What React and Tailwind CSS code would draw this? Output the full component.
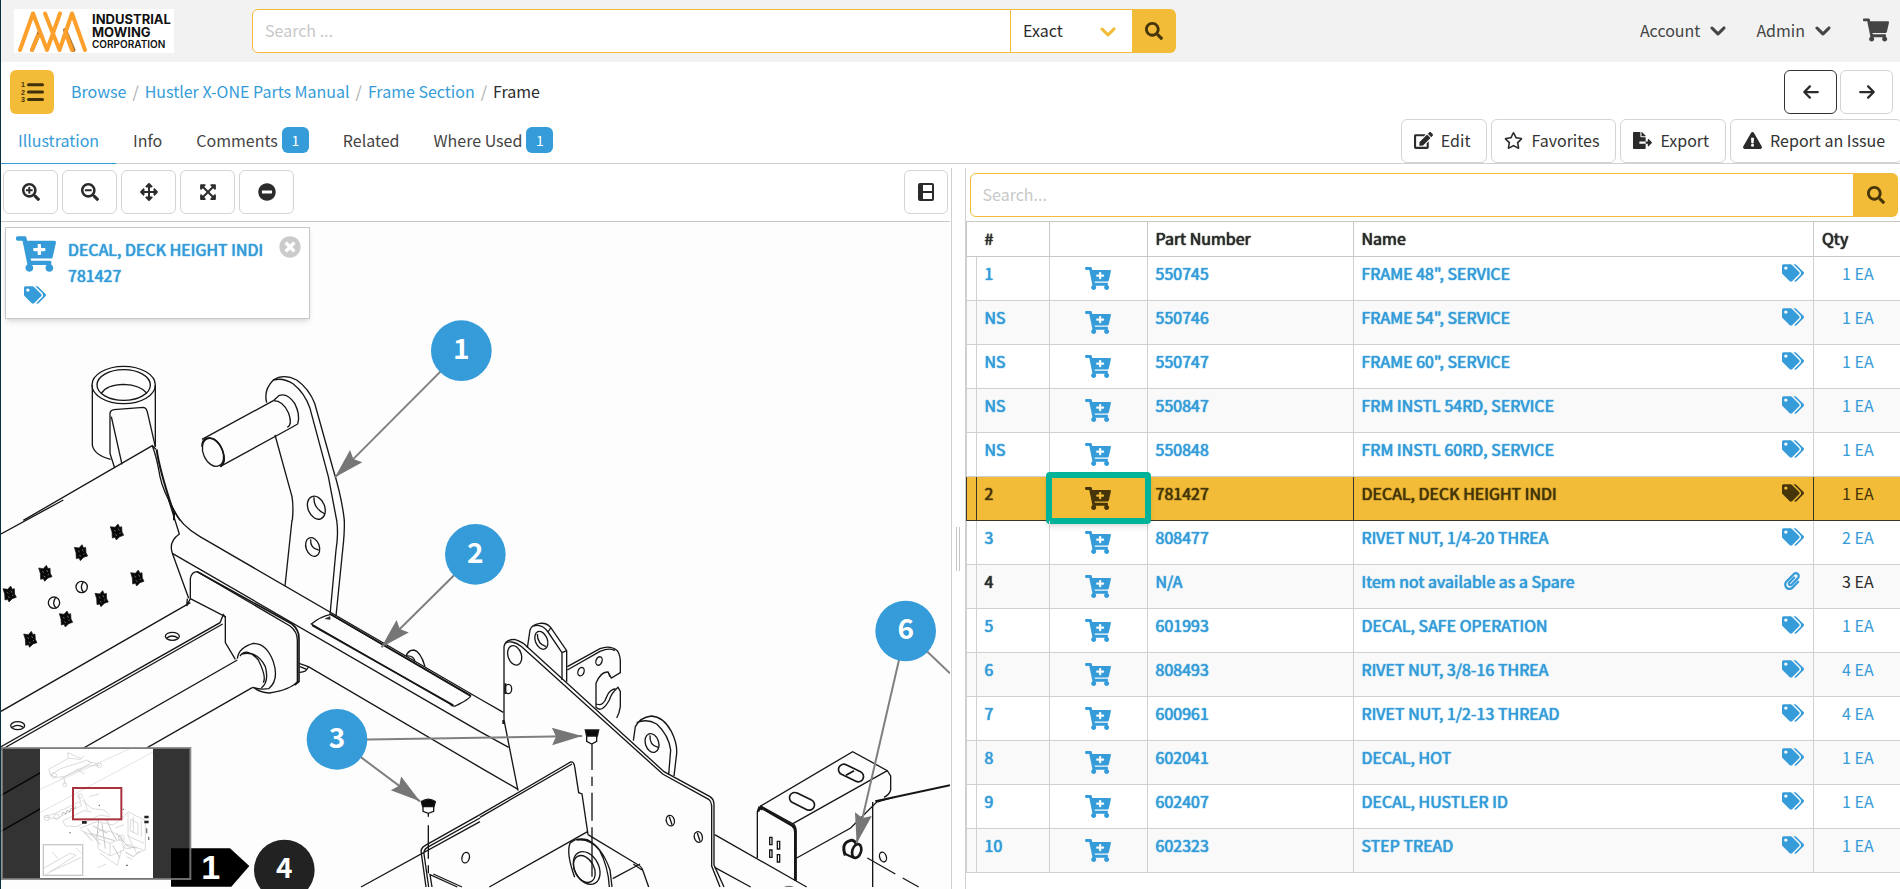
import { useState } from 'react';
import {
  FaSearch, FaSearchPlus, FaSearchMinus, FaArrowsAlt, FaExpandArrowsAlt, FaMinusCircle,
  FaEdit, FaRegStar, FaFileExport, FaExclamationTriangle, FaShoppingCart, FaCartPlus,
  FaTags, FaPaperclip, FaTimesCircle
} from 'react-icons/fa';
import { FaChevronDown, FaArrowLeft, FaArrowRight } from 'react-icons/fa6';

const PARTS = [
  { item: '1', number: '550745', name: 'FRAME 48", SERVICE', qty: '1 EA' },
  { item: 'NS', number: '550746', name: 'FRAME 54", SERVICE', qty: '1 EA' },
  { item: 'NS', number: '550747', name: 'FRAME 60", SERVICE', qty: '1 EA' },
  { item: 'NS', number: '550847', name: 'FRM INSTL 54RD, SERVICE', qty: '1 EA' },
  { item: 'NS', number: '550848', name: 'FRM INSTL 60RD, SERVICE', qty: '1 EA' },
  { item: '2', number: '781427', name: 'DECAL, DECK HEIGHT INDI', qty: '1 EA' },
  { item: '3', number: '808477', name: 'RIVET NUT, 1/4-20 THREA', qty: '2 EA' },
  { item: '4', number: 'N/A', name: 'Item not available as a Spare', qty: '3 EA', unavailable: true },
  { item: '5', number: '601993', name: 'DECAL, SAFE OPERATION', qty: '1 EA' },
  { item: '6', number: '808493', name: 'RIVET NUT, 3/8-16 THREA', qty: '4 EA' },
  { item: '7', number: '600961', name: 'RIVET NUT, 1/2-13 THREAD', qty: '4 EA' },
  { item: '8', number: '602041', name: 'DECAL, HOT', qty: '1 EA' },
  { item: '9', number: '602407', name: 'DECAL, HUSTLER ID', qty: '1 EA' },
  { item: '10', number: '602323', name: 'STEP TREAD', qty: '1 EA' }
];

const TABS = [
  { label: 'Illustration' },
  { label: 'Info' },
  { label: 'Comments', count: 1 },
  { label: 'Related' },
  { label: 'Where Used', count: 1 }
];

const BOLTS = [[351, 96], [243, 158], [136, 220], [29, 282], [412, 234], [305, 296], [198, 357], [91, 418]];

// Half-bold: regular weight thickened a little
const STRONG = '[text-shadow:0_0_1px_currentColor,0_0_1px_currentColor]';

function Logo() {
  return (
    <svg viewBox="0 0 160 44" className="h-11 w-40 bg-white" role="img" aria-label="Industrial Mowing Corporation">
      <g fill="none" stroke="#fd9f2b" strokeWidth="4" strokeLinecap="round" strokeLinejoin="round">
        <path d="M18 41 25.500 23M59.500 41 51 21" stroke="#a8702a" />
        <path d="M6 41 19 4.500 33 41M18 41 24 27M31 4.500 45.500 41M33 41 46 4.500M45.500 41 58 4.500 71 41M58 41 52 25" />
      </g>
      <g fill="#111" fontFamily="Inter, sans-serif" fontWeight="700" fontSize="13">
        <text x="78" y="15">INDUSTRIAL</text>
        <text x="78" y="28">MOWING</text>
        <text x="78" y="39" fontSize="10" fontWeight="600">CORPORATION</text>
      </g>
    </svg>
  );
}

function NumberedListIcon() {
  return (
    <svg viewBox="0 0 24 24" className="size-6" aria-hidden="true">
      <g fill="#3f310c" fontFamily="Liberation Sans, sans-serif" fontWeight="700" fontSize="7">
        <text x="1" y="7">1</text>
        <text x="1" y="14.500">2</text>
        <text x="1" y="22">3</text>
      </g>
      <path d="M8.500 4.700H22.500M8.500 12H22.500M8.500 19.500H22.500" stroke="#3f310c" strokeWidth="3" strokeLinecap="round" />
    </svg>
  );
}

function LayoutIcon() {
  return (
    <svg viewBox="0 0 16 18" className="h-[18px] w-4" aria-hidden="true">
      <rect x="1" y="1" width="14" height="16" rx="1" fill="none" stroke="#2b2b2b" strokeWidth="2" />
      <path d="M3 1V17" stroke="#2b2b2b" strokeWidth="4" />
      <path d="M4 9H15" stroke="#2b2b2b" strokeWidth="2" />
    </svg>
  );
}

function Hotspot({ x, y, label, dark }) {
  return (
    <g>
      <circle cx={x} cy={y} r="91" fill={dark ? '#222' : '#359cd9'} />
      <text x={x} y={y + 25} textAnchor="middle" fill="#fff" fontSize="84" fontWeight="700">{label}</text>
    </g>
  );
}

function Leader({ x1, y1, x2, y2 }) {
  const angle = (Math.atan2(y2 - y1, x2 - x1) * 180) / Math.PI;
  return (
    <g>
      <path d={`M${x1} ${y1}L${x2} ${y2}`} stroke="#808080" strokeWidth="6" />
      <path d="M0 0-90-26-78 0-90 26Z" fill="#767676" transform={`translate(${x2} ${y2}) rotate(${angle})`} />
    </g>
  );
}

function MiniMap() {
  return (
    <g>
      <rect x="6" y="744" width="565" height="393" fill="#000" fillOpacity="0.8" />
      <rect x="120" y="746" width="339" height="388" fill="#fff" />
      <path d="M120 868 390 746M120 938 459 756" stroke="#e4e4e4" strokeWidth="3" />
      <g fill="none" stroke="#c8c8c8" strokeWidth="2">
        <path d="M146 808 205 775 240 778 252 768M152 826 182 806 262 780 272 790 192 830 172 832ZM205 775 203 758 244 776M182 836 264 798 300 796M264 784 292 792M192 830 194 852M228 806 254 822M146 808 152 826" />
        <circle cx="194" cy="854" r="6" />
        <circle cx="298" cy="796" r="7" />
        <circle cx="162" cy="826" r="8" />
        <path d="M132 950 166 940 236 906 246 916 170 956 136 952M190 962 252 932 274 936M236 884 242 908M252 896 262 930M268 890 298 882M246 900 276 926 312 930 330 946M188 962 196 978 230 980 300 945 330 950" />
        <path d="M184 946 190 936 196 942 202 930 208 936 214 924 220 930 228 918" stroke="#999" />
        <path d="M240 985 290 965 340 975 372 950 384 935 436 962 436 1050 410 1060 384 1008 384 940M392 958 414 970 414 1004 390 992ZM384 1008 432 1030M400 950V1000M424 962V1010" />
        <path d="M242 990 286 1012 300 990 336 996 364 1010 372 1050 330 1068 294 1046 294 1016 330 1030 330 1068M300 1060 352 1096 364 1050M330 1030 366 1016M346 984 372 974M380 1070 396 1078M318 1092 292 1104M402 1040 430 1050" />
        <path d="M250 994 276 1022M262 986 300 1034M280 978 322 1000M350 1000 384 1040 410 1044M296 960 290 1020M306 970 316 1046M270 1000 344 1022M320 960 334 992 350 1020M338 1036 360 1074M376 1056 400 1070 420 1054" strokeWidth="3" />
        <circle cx="140" cy="954" r="8" />
        <circle cx="170" cy="950" r="8" />
        <circle cx="240" cy="888" r="7" />
        <circle cx="364" cy="1014" r="9" />
        <ellipse cx="384" cy="1040" rx="12" ry="6" />
        <rect x="130" y="1034" width="118" height="92" strokeWidth="4" />
        <path d="M132 1104 210 1060 228 1066 150 1116 138 1124M150 1116 244 1072M156 1056 176 1078M228 1044 244 1060" />
      </g>
      <path d="M246 967H260M433 951H446M433 966H446" stroke="#222" strokeWidth="8" />
      <path d="M368 928H372M296 916H300M208 998H212M378 1096H384M440 985V1000M446 1010V1020" stroke="#777" strokeWidth="4" />
      <rect x="219" y="864" width="145" height="94" fill="none" stroke="#a8323e" strokeWidth="6" />
      <rect x="6" y="744" width="565" height="393" fill="none" stroke="#808080" strokeOpacity="0.85" strokeWidth="6" />
    </g>
  );
}

function FrameDrawing() {
  return (
    <svg
      viewBox="3 666 2850 2001"
      preserveAspectRatio="xMinYMin slice"
      className="absolute inset-0 h-full w-full"
      fill="none"
      role="img"
      aria-label="Frame illustration"
    >
      {/* Caster tube and lift arm */}
      <g transform="translate(0 480)" stroke="#161616" strokeWidth="4">
        <ellipse cx="371" cy="675" rx="95" ry="56" />
        <ellipse cx="371" cy="675" rx="80" ry="46" />
        <path d="M304 700Q320 674 371 673 422 675 441 700" />
        <path d="M277 675V856Q284 886 332 898M466 675V860" />
        <path d="M344 924 330 880V765Q328 752 342 749L430 742Q440 743 443 760L466 860" />
        <path d="M334 770 366 913" />
        <path d="M70 1081 457 857 468 868" />
        <path d="M457 857Q470 890 480 950 490 1000 540 1081" />
        <path d="M470 868Q478 930 522 1060V1081" strokeWidth="6" />
        <path d="M606 838 820 722M660 920 872 804M872 804 893 792" />
        <ellipse cx="639" cy="877" rx="29" ry="44" transform="rotate(-24 639 877)" />
        <path d="M606 860Q606 832 632 834 654 838 668 872 680 905 662 920" strokeWidth="5" />
        <path d="M820 722Q850 722 866 760 878 795 862 802M820 722 838 706Q862 698 884 730 902 765 893 792" />
        <path d="M800 728Q790 690 820 660 850 652 880 672 915 700 930 745L985 950 1010 1081" />
        <path d="M820 660Q850 640 890 660 926 685 944 730L1000 930Q1025 1010 1033 1081" />
        <path d="M825 825 876 1010Q881 1040 877 1081" />
        <ellipse cx="949" cy="1043" rx="25" ry="36" transform="rotate(-22 949 1043)" />
        <path d="M942 1012Q940 1045 975 1062" />
      </g>

      {/* Side plate, rails and cross tube */}
      <g transform="translate(0 1500)" stroke="#161616" strokeWidth="4">
        <path d="M3 102 190 0M506 0 538 102Q505 125 517 160L566 295" />
        <path d="M508 0Q530 70 600 110L1440 597" />
        <path d="M517 160 1440 695" />
        <path d="M876 60 855 258M1010 60Q1016 100 1008 150L990 345M1033 60Q1034 100 1028 150L1008 348" />
        <ellipse cx="938" cy="141" rx="20" ry="29" transform="rotate(-20 938 141)" />
        <path d="M932 118Q930 145 956 150" />
        <path d="M571 296V236Q574 216 592 215L870 378Q892 395 892 420V545Q870 570 808 579 780 578 760 562" />
        <path d="M592 215 876 372Q897 390 897 414V545L884 555" strokeWidth="5" />
        <path d="M571 296 560 318 562 296M571 296 676 350V428L706 478" />
        <path d="M3 634 571 308M3 740 660 368 670 344 676 352M3 750 668 372" />
        <path d="M3 886 712 480M3 994 758 562" />
        <path d="M712 476Q716 442 760 430 800 430 820 485 838 540 806 566 780 570 758 562" />
        <path d="M720 468Q740 440 775 480 800 530 790 548M726 462Q770 450 796 500 808 545 784 564" />
        <ellipse cx="517" cy="409" rx="21" ry="12" />
        <path d="M500 414Q517 402 534 414M36 682Q53 670 70 682" />
        <ellipse cx="53" cy="677" rx="21" ry="12" />
        <path d="M1218 468Q1225 450 1242 450 1262 455 1275 500M1218 468Q1240 465 1245 485" />
        <path d="M897 490 925 500 1440 802M925 500Q920 518 897 517M900 500 920 508" />
        <path d="M934 372Q960 350 992 343L1412 586Q1414 594 1366 618 1356 620 1350 612Z" />
        <path d="M992 343 1412 588M936 376 1360 616" strokeWidth="5" />
        <path d="M976 356 990 350 990 358Z" fill="#333" strokeWidth="2" />
        <circle cx="245" cy="261" r="17" />
        <circle cx="162" cy="308" r="17" />
        <path d="M250 246Q238 262 250 276M167 293Q155 309 167 323" />
        {BOLTS.map(([x, y]) => (
          <g key={x} transform={`translate(${x} ${y})`}>
            <path d="M-20-16-6-14 3-24 8-14 14-16 15 0 20 10 8 14-2 24-6 16-14 18-15 0Z" fill="#080808" strokeWidth="2" />
            <path d="M-9-6-4-2M4-10 7-4M-5 8 0 11M8 6 10 2" stroke="#999" strokeWidth="2" />
          </g>
        ))}
        <path d="M1264 905Q1285 890 1306 905L1302 920 1268 920Z" fill="#0a0a0a" />
        <path d="M1269 920V934L1285 940 1301 934V920M1285 940V950M1285 976V1076M1285 1096V1120" />
        <path d="M1083 1161 1440 965M1440 944 1276 1036Q1260 1045 1264 1060L1278 1161M1440 954 1282 1042Q1270 1050 1272 1062L1286 1161" />
        <path d="M1296 1161 1290 1124 1372 1161M1300 1122 1386 1161" />
        <ellipse cx="1397" cy="1073" rx="11" ry="16" transform="rotate(15 1397 1073)" />
      </g>

      {/* Brackets and rear plate */}
      <g transform="translate(1440 1500)" stroke="#161616" strokeWidth="4">
        <path d="M0 597 70 637M0 695 86 742M0 802 114 868" />
        <path d="M114 872 72 660V440Q76 418 104 418 118 422 130 430L552 815 690 890Q702 898 702 914V1095L732 1161" />
        <path d="M76 430Q84 424 96 426 110 428 125 440L548 822 686 898Q694 904 695 916V1098L720 1161" />
        <ellipse cx="104" cy="466" rx="20" ry="30" transform="rotate(-18 104 466)" />
        <ellipse cx="85" cy="567" rx="10" ry="14" />
        <path d="M76 550V582M70 660V672" strokeWidth="6" />
        <path d="M142 444 150 390Q154 374 180 370 200 368 212 382L260 452V545M160 378Q186 370 204 396L246 458V540M246 458 260 452M204 396 212 384" />
        <ellipse cx="184" cy="421" rx="18" ry="28" transform="rotate(-22 184 421)" />
        <path d="M172 402Q172 432 198 440" />
        <path d="M262 500 360 446Q390 434 412 452 422 468 421 490V518L394 534 384 516Q362 514 348 550V622Q366 640 388 600 394 580 414 562L421 574V620Q418 640 410 654M262 510 360 454Q390 442 404 452M384 516 390 530M350 612Q370 620 380 590 388 570 406 566" />
        <ellipse cx="357" cy="483" rx="9" ry="13" transform="rotate(20 357 483)" />
        <ellipse cx="303" cy="515" rx="9" ry="13" transform="rotate(20 303 515)" />
        <path d="M460 722 466 680Q480 652 514 648 550 650 574 694 592 730 590 760L582 828M470 668Q500 655 530 672 566 705 572 750L566 824" />
        <ellipse cx="516" cy="729" rx="20" ry="29" transform="rotate(-18 516 729)" />
        <path d="M510 706Q508 736 534 742" />
        <ellipse cx="571" cy="962" rx="12" ry="16" transform="rotate(-15 571 962)" />
        <ellipse cx="655" cy="1011" rx="12" ry="16" transform="rotate(-15 655 1011)" />
        <path d="M568 950 576 974M652 999 660 1023" />
        <path d="M0 944 272 786Q282 784 284 800L296 878 306 882 324 1004M0 952 276 792" />
        <path d="M28 1161 324 994M324 1004 470 1092Q484 1098 488 1110L506 1161M398 1136 480 1092M460 1092 486 1110" />
        <path d="M284 1132Q258 1060 270 1030 290 1010 324 1020 365 1040 390 1110L396 1161M290 1020Q330 1015 358 1050 385 1100 388 1161" />
        <ellipse cx="320" cy="1104" rx="36" ry="52" transform="rotate(-28 320 1104)" />
        <ellipse cx="313" cy="1107" rx="29" ry="43" transform="rotate(-28 313 1107)" />
        <path d="M316 690H356L352 708H320Z" fill="#0a0a0a" />
        <path d="M320 708V724L335 732 350 724V708M336 732V810M336 830V858M336 878V962M336 982V1130" />
        <path d="M704 1004 980 1161M704 1102 812 1161" />
        {/* Slotted box */}
        <path d="M832 1074V935L842 918 1118 755 1222 812 1232 828V870Q1228 884 1212 892" />
        <path d="M940 970 1222 812M842 918 940 972Q948 978 948 992V1142M950 1074 1112 984 1190 906 1240 892" />
        <path d="M840 920 936 976Q946 984 946 996V1142M834 935 838 924 848 928" strokeWidth="8" />
        <path d="M1186 904 1410 856" strokeWidth="6" />
        <path d="M1178 906V1161" />
        <g strokeWidth="5">
          <rect x="926" y="888" width="80" height="32" rx="16" transform="rotate(26 966 904)" />
          <rect x="1073" y="803" width="80" height="32" rx="16" transform="rotate(26 1113 819)" />
          <path d="M1098 826 1122 812" />
        </g>
        <path d="M869 1012H876V1034H869ZM869 1050H876V1072H869ZM892 1024H899V1047H892ZM892 1064H899V1086H892Z" />
        <path d="M1096 1066Q1082 1030 1110 1022 1120 1018 1128 1030" strokeWidth="9" />
        <ellipse cx="1130" cy="1053" rx="13" ry="21" transform="rotate(18 1130 1053)" strokeWidth="8" />
        <path d="M1096 1062 1122 1074" strokeWidth="6" />
        <ellipse cx="1209" cy="1071" rx="10" ry="15" transform="rotate(-18 1209 1071)" />
        <path d="M1162 1074 1246 1122M1268 1134 1316 1161" />
        <path d="M912 1161Q926 1154 942 1161Z" fill="#777" stroke="none" />
      </g>

      <Leader x1={1384} y1={1052} x2={1005} y2={1432} />
      <Leader x1={1426} y1={1663} x2={1144} y2={1942} />
      <Leader x1={1011} y1={2218} x2={1260} y2={2404} />
      <Leader x1={1011} y1={2220} x2={1746} y2={2208} />
      <Leader x1={2717} y1={1893} x2={2570} y2={2530} />
      <path d="M2717 1893 2850 2020" stroke="#808080" strokeWidth="6" />

      <Hotspot x={1384} y={1052} label="1" />
      <Hotspot x={1426} y={1663} label="2" />
      <Hotspot x={1011} y={2218} label="3" />
      <Hotspot x={2717} y={1893} label="6" />

      <path d="M513 2545H690L748 2598 694 2660H513Z" fill="#000" />
      <text x="632" y="2637" textAnchor="middle" fill="#fff" fontSize="102" fontWeight="700" fontFamily="Liberation Sans, sans-serif">1</text>
      <Hotspot x={853} y={2610} label="4" dark />

      <g transform="translate(0 1500)">
        <MiniMap />
      </g>
    </svg>
  );
}

function Chevron({ className }) {
  return <FaChevronDown className={className} stroke="currentColor" strokeWidth="36" />;
}

function ToolButton({ label, children }) {
  return (
    <button aria-label={label} className="flex h-11 w-[55px] items-center justify-center rounded-md border border-[#d4d4d4] bg-white text-lg text-[#2b2b2b]">
      {children}
    </button>
  );
}

function ActionButton({ icon, children }) {
  return (
    <button className="flex h-11 items-center gap-2 rounded-md border border-[#d4d4d4] bg-white pr-4 pb-0.5 pl-3 whitespace-nowrap text-[#333]">
      <span className="text-[19px] text-[#2b2b2b]">{icon}</span>
      {children}
    </button>
  );
}

export default function App() {
  const [activeTab, setActiveTab] = useState('Illustration');
  const [selected, setSelected] = useState('781427');
  const [showCard, setShowCard] = useState(true);

  return (
    <div className="flex min-h-screen flex-col overflow-x-hidden border-l border-[#06303a] bg-white font-['Noto_Sans_CJK_SC',sans-serif] text-base leading-6 text-[#2b2b2b]">
      {/* Header */}
      <header className="flex h-[62px] items-center bg-[#f2f2f2] pr-[11px] pl-[13px]">
        <a href="#home" className="shrink-0"><Logo /></a>
        <form className="ml-[78px] flex h-11 max-w-[924px] flex-1" onSubmit={(e) => e.preventDefault()}>
          <input
            type="text"
            aria-label="Search"
            placeholder="Search ..."
            className="min-w-0 flex-1 rounded-l-md border border-[#f2bb38] bg-white px-3 pb-0.5 outline-none placeholder:text-[#c8c8c8]"
          />
          <div className="relative w-[121px] border-y border-[#f2bb38] bg-white">
            <select aria-label="Match type" className="h-full w-full appearance-none bg-white pb-0.5 pl-3 outline-none">
              <option>Exact</option>
              <option>Contains</option>
            </select>
            <Chevron className="pointer-events-none absolute top-[13px] right-4 size-4 text-[#f2bb38]" />
          </div>
          <button aria-label="Search" className="flex w-11 items-center justify-center rounded-r-md bg-[#f2bb38] text-lg text-[#453508]">
            <FaSearch />
          </button>
        </form>
        <nav className="ml-auto flex items-center pb-0.5 text-[#444]">
          <button className="mr-[30px] flex items-center gap-2.5">Account <Chevron className="size-4" /></button>
          <button className="mr-8 flex items-center gap-2.5">Admin <Chevron className="size-4" /></button>
          <a href="#cart" aria-label="Cart"><FaShoppingCart className="h-6 w-[26px]" /></a>
        </nav>
      </header>

      {/* Breadcrumb */}
      <div className="flex items-center pt-2 pr-[7px] pl-[9px]">
        <button aria-label="Table of contents" className="flex size-11 items-center justify-center rounded-md bg-[#f2bb38]">
          <NumberedListIcon />
        </button>
        <nav aria-label="Breadcrumb" className="ml-[17px] flex gap-1.5 pb-0.5">
          <a href="#browse" className="text-[#359cd9]">Browse</a>
          <span className="text-[#aaa]">/</span>
          <a href="#manual" className="text-[#359cd9]">Hustler X-ONE Parts Manual</a>
          <span className="text-[#aaa]">/</span>
          <a href="#section" className="text-[#359cd9]">Frame Section</a>
          <span className="text-[#aaa]">/</span>
          <span>Frame</span>
        </nav>
        <div className="ml-auto flex gap-[3px]">
          <button aria-label="Previous" className="flex h-11 w-[53px] items-center justify-center rounded-md border border-[#333] text-lg"><FaArrowLeft /></button>
          <button aria-label="Next" className="flex h-11 w-[53px] items-center justify-center rounded-md border border-[#d4d4d4] text-lg"><FaArrowRight /></button>
        </div>
      </div>

      {/* Tabs and page actions */}
      <div className="flex h-[50px] items-stretch justify-between border-b border-[#d0d0d0]">
        <div className="flex">
          {TABS.map((tab) => (
            <button
              key={tab.label}
              onClick={() => setActiveTab(tab.label)}
              className={`-mb-px flex items-center gap-1 border-b px-[17px] pt-0.5 whitespace-nowrap ${
                activeTab === tab.label ? 'border-[#359cd9] text-[#359cd9]' : 'border-transparent text-[#444]'
              }`}
            >
              {tab.label}
              {tab.count && (
                <span className="flex h-[26px] w-[27px] items-center justify-center rounded-md bg-[#359cd9] text-sm text-white">{tab.count}</span>
              )}
            </button>
          ))}
        </div>
        <div className="-mr-0.5 flex items-end gap-1">
          <ActionButton icon={<FaEdit />}>Edit</ActionButton>
          <ActionButton icon={<FaRegStar />}>Favorites</ActionButton>
          <ActionButton icon={<FaFileExport />}>Export</ActionButton>
          <ActionButton icon={<FaExclamationTriangle />}>Report an Issue</ActionButton>
        </div>
      </div>

      <div className="flex flex-1 pt-1">
        {/* Illustration */}
        <section className="flex w-1/2 flex-col pr-px">
          <div className="flex border-b border-[#c8c8c8] pt-0.5 pr-0.5 pb-[7px] pl-0.5">
            <div className="flex gap-1">
              <ToolButton label="Zoom in"><FaSearchPlus /></ToolButton>
              <ToolButton label="Zoom out"><FaSearchMinus /></ToolButton>
              <ToolButton label="Pan"><FaArrowsAlt /></ToolButton>
              <ToolButton label="Fit"><FaExpandArrowsAlt /></ToolButton>
              <ToolButton label="Hide callouts"><FaMinusCircle /></ToolButton>
            </div>
            <button aria-label="Layout" className="ml-auto flex size-11 items-center justify-center rounded-md border border-[#d4d4d4]">
              <LayoutIcon />
            </button>
          </div>
          <div className="relative flex-1 overflow-hidden bg-[#fdfdfd]">
            <FrameDrawing />
            {showCard && (
              <div className="absolute top-[5px] left-1 flex h-[92px] w-[305px] border border-[#c8c8c8] bg-white px-2 pt-2 text-[#359cd9] shadow-md">
                <div className="flex w-[54px] flex-col items-start gap-3.5 pl-0.5">
                  <button aria-label="Add to cart"><FaCartPlus className="h-9 w-10" /></button>
                  <FaTags className="ml-2 h-[18px] w-[22px]" />
                </div>
                <div className={`flex flex-col leading-[26px] ${STRONG}`}>
                  <a href="#part">DECAL, DECK HEIGHT INDI</a>
                  <a href="#part">781427</a>
                </div>
                <button aria-label="Close" onClick={() => setShowCard(false)} className="ml-auto self-start">
                  <FaTimesCircle className="size-[22px] text-[#cbcbcb]" />
                </button>
              </div>
            )}
          </div>
        </section>

        {/* Splitter */}
        <div className="flex w-[15px] shrink-0 items-center justify-center border-x border-[#cfcfcf] pt-10">
          <div className="h-11 w-1 border-x border-[#c4c4c4]" />
        </div>

        {/* Parts list */}
        <section className="min-w-0 flex-1">
          <form className="flex h-[53px] pt-[5px] pr-0.5 pb-1 pl-1" onSubmit={(e) => e.preventDefault()}>
            <input
              type="text"
              aria-label="Search parts"
              placeholder="Search..."
              className="min-w-0 flex-1 rounded-l-md border border-[#f2bb38] px-3 pb-0.5 outline-none placeholder:text-[#c8c8c8]"
            />
            <button aria-label="Search parts" className="flex w-11 items-center justify-center rounded-r-md bg-[#f2bb38] text-lg text-[#453508]">
              <FaSearch />
            </button>
          </form>
          <table className="w-full table-fixed border-separate border-spacing-0">
            <colgroup>
              <col className="w-2.5" />
              <col className="w-[73px]" />
              <col className="w-[98px]" />
              <col className="w-[206px]" />
              <col />
              <col className="w-[87px]" />
            </colgroup>
            <thead>
              <tr className={`h-9 text-left [&>th]:border-y [&>th]:border-l [&>th]:border-[#c8c8c8] [&>th]:pb-0.5 [&>th]:font-normal ${STRONG}`}>
                <th colSpan={2} className="pl-[18px]">#</th>
                <th aria-label="Cart" />
                <th className="pl-2">Part Number</th>
                <th className="pl-2">Name</th>
                <th className="pl-2">Qty</th>
              </tr>
            </thead>
            <tbody>
              {PARTS.map((part, index) => {
                const isSelected = part.number === selected;
                const line = isSelected ? 'border-[#3b3526]' : 'border-[#d0d0d0]';
                const cell = `border-b border-l align-top pt-1 ${line}`;
                return (
                  <tr
                    key={index}
                    onClick={() => setSelected(part.number)}
                    className={`h-11 ${
                      isSelected ? 'bg-[#f2bb38] text-[#453508]' : index % 2 ? 'bg-[#f9f9f9] text-[#359cd9]' : 'text-[#359cd9]'
                    }`}
                  >
                    <td className={cell} />
                    <td className={`${cell} pl-2 ${STRONG} ${part.unavailable ? 'text-[#2b2b2b]' : ''}`}>{part.item}</td>
                    <td className={`${cell} relative`}>
                      <button aria-label="Add to cart" className="mx-auto block pt-1.5">
                        <FaCartPlus className="h-[23px] w-[26px]" />
                      </button>
                      {isSelected && (
                        <div className="pointer-events-none absolute -inset-x-1 -top-[5px] -bottom-1 rounded-sm border-[6px] border-[#00b398] shadow-md" />
                      )}
                    </td>
                    <td className={`${cell} pl-2 ${STRONG}`}>{part.number}</td>
                    <td className={`${cell} pr-[9px] pl-2 ${STRONG}`}>
                      <div className="flex items-center justify-between">
                        <a href="#part">{part.name}</a>
                        {part.unavailable ? <FaPaperclip className="mr-[3px] size-[18px]" /> : <FaTags className="h-[18px] w-[22px]" />}
                      </div>
                    </td>
                    <td className={`${cell} pl-7 ${part.unavailable ? 'text-[#2b2b2b]' : ''}`}>{part.qty}</td>
                  </tr>
                );
              })}
            </tbody>
          </table>
        </section>
      </div>
    </div>
  );
}
